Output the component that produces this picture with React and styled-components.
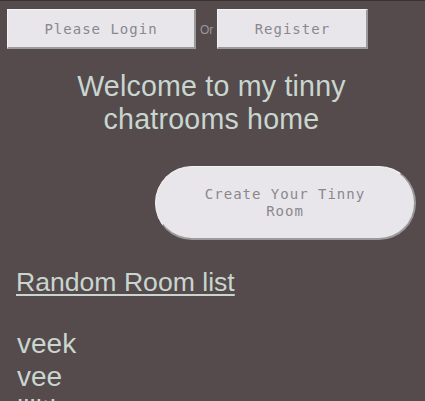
import React from "react";
import styled, { createGlobalStyle } from "styled-components";

const Global = createGlobalStyle`
  html, body { margin: 0; padding: 0; }
  body {
    background: #554a4c;
    border-top: 1px solid #3a3234;
    font-family: "Liberation Sans", Arial, sans-serif;
    overflow: hidden;
  }
`;

const Page = styled.div`
  display: flex;
  flex-direction: column;
  padding: 8px 9px 0 7px;
`;

const TopBar = styled.div`
  display: flex;
  align-items: center;
  gap: 4px;
`;

const BoxButton = styled.button`
  box-sizing: border-box;
  width: ${(p) => p.$w}px;
  height: 40px;
  background: #e8e6eb;
  border-style: solid;
  border-color: #f3f2f5 #9a9a9a #9a9a9a #f3f2f5;
  border-width: 1px 2px 2px 1px;
  border-radius: 0;
  color: #8a888c;
  font-family: "DejaVu Sans Mono", monospace;
  font-size: 14px;
  letter-spacing: 1px;
  padding: 0;
  cursor: pointer;
`;

const Or = styled.span`
  font-size: 12px;
  color: #9a9898;
  margin-top: 2px;
`;

const Title = styled.h1`
  margin: 21px 0 0;
  text-align: center;
  font-weight: normal;
  font-size: 28.6px;
  line-height: 33px;
  letter-spacing: 0.2px;
  color: #c8d6cf;
  padding: 0 60px;
`;

const CreateRow = styled.div`
  display: flex;
  justify-content: flex-end;
  margin-top: 30px;
`;

const PillButton = styled.button`
  box-sizing: border-box;
  width: 261px;
  height: 74px;
  display: flex;
  align-items: center;
  justify-content: center;
  background: #e8e6eb;
  border-style: solid;
  border-color: #f3f2f5 #9a9a9a #9a9a9a #f3f2f5;
  border-width: 1px 2px 2px 1px;
  border-radius: 37px;
  color: #8a888c;
  font-family: "DejaVu Sans Mono", monospace;
  font-size: 14px;
  line-height: 17px;
  letter-spacing: 1px;
  padding: 0 40px;
  cursor: pointer;
`;

const ListTitle = styled.h2`
  margin: 27px 0 0 9px;
  font-weight: normal;
  font-size: 26.6px;
  color: #c8d6cf;
  text-decoration: underline;
  text-decoration-thickness: 2px;
  text-underline-offset: 3px;
`;

const RoomList = styled.ul`
  list-style: none;
  margin: 29px 0 0 10px;
  padding: 0;
`;

const RoomItem = styled.li`
  font-size: 28px;
  line-height: 33px;
  color: #c8d6cf;
`;

const rooms = ["veek", "vee", "lilltk"];

export default function App() {
  return (
    <>
      <Global />
      <Page>
        <TopBar>
          <BoxButton $w={189}>Please Login</BoxButton>
          <Or>Or</Or>
          <BoxButton $w={151}>Register</BoxButton>
        </TopBar>
        <Title>Welcome to my tinny chatrooms home</Title>
        <CreateRow>
          <PillButton>Create Your Tinny Room</PillButton>
        </CreateRow>
        <ListTitle>Random Room list</ListTitle>
        <RoomList>
          {rooms.map((r) => (
            <RoomItem key={r}>{r}</RoomItem>
          ))}
        </RoomList>
      </Page>
    </>
  );
}
